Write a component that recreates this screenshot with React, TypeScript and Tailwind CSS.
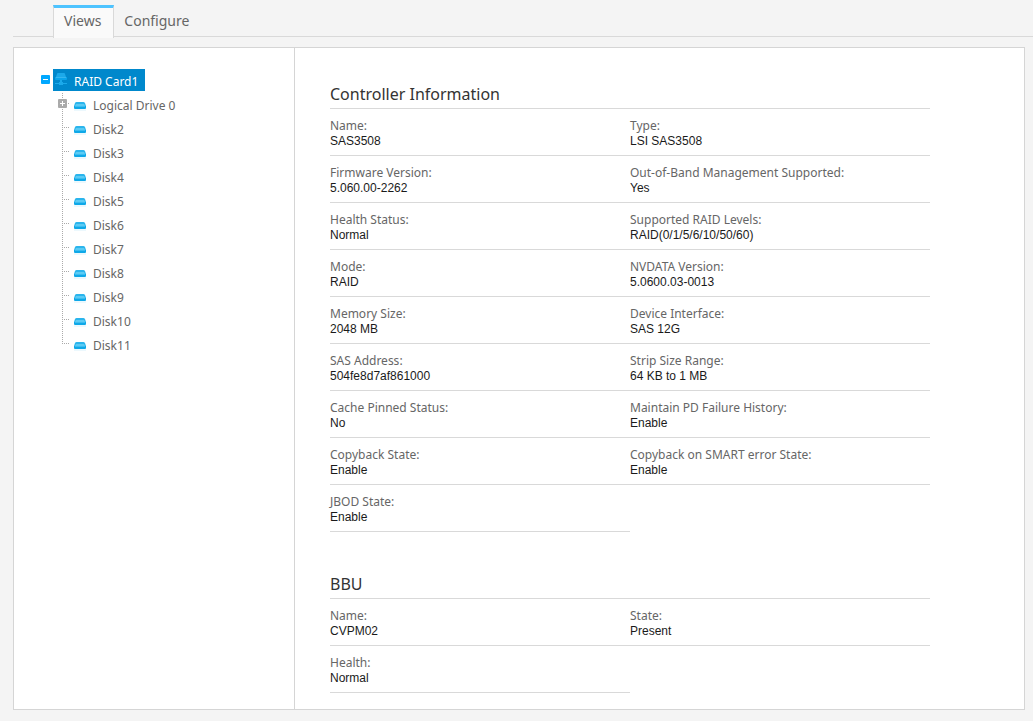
import { useState } from 'react';

interface Field {
  label: string;
  value: string;
}

const TABS = ['Views', 'Configure'];

const NODES = [
  'Logical Drive 0',
  'Disk2',
  'Disk3',
  'Disk4',
  'Disk5',
  'Disk6',
  'Disk7',
  'Disk8',
  'Disk9',
  'Disk10',
  'Disk11',
];

const CONTROLLER: Field[] = [
  { label: 'Name', value: 'SAS3508' },
  { label: 'Type', value: 'LSI SAS3508' },
  { label: 'Firmware Version', value: '5.060.00-2262' },
  { label: 'Out-of-Band Management Supported', value: 'Yes' },
  { label: 'Health Status', value: 'Normal' },
  { label: 'Supported RAID Levels', value: 'RAID(0/1/5/6/10/50/60)' },
  { label: 'Mode', value: 'RAID' },
  { label: 'NVDATA Version', value: '5.0600.03-0013' },
  { label: 'Memory Size', value: '2048 MB' },
  { label: 'Device Interface', value: 'SAS 12G' },
  { label: 'SAS Address', value: '504fe8d7af861000' },
  { label: 'Strip Size Range', value: '64 KB to 1 MB' },
  { label: 'Cache Pinned Status', value: 'No' },
  { label: 'Maintain PD Failure History', value: 'Enable' },
  { label: 'Copyback State', value: 'Enable' },
  { label: 'Copyback on SMART error State', value: 'Enable' },
  { label: 'JBOD State', value: 'Enable' },
];

const BBU: Field[] = [
  { label: 'Name', value: 'CVPM02' },
  { label: 'State', value: 'Present' },
  { label: 'Health', value: 'Normal' },
];

function CardIcon() {
  return (
    <svg width="14" height="14" viewBox="0 0 14 14" fill="none" aria-hidden="true">
      <path d="M4 0h6a1 1 0 0 1 1 1l1 3H2l1-3a1 1 0 0 1 1-1z" fill="#1ba9ea" />
      <path d="M1 4h12v2a1 1 0 0 1-1 1H2a1 1 0 0 1-1-1z" fill="#0aa4ea" />
      <path d="M2 4.5h10" stroke="#35b6f0" />
      <path d="M7 7v2" stroke="#1ba9ea" strokeWidth="2" />
      <path d="M1 10.5h12" stroke="#1ba9ea" />
      <path d="M5 9h4v3H5z" fill="#1ba9ea" />
    </svg>
  );
}

function DiskIcon() {
  return (
    <svg width="12" height="10" viewBox="0 0 12 10" fill="none" aria-hidden="true">
      <path d="M3 1h6a2 2 0 0 1 2 1l1 3H0l1-3a2 2 0 0 1 2-1z" fill="#2bb5ed" />
      <path d="M2 3h8l1 2H1z" fill="#5ccbf4" />
      <path d="M0 5h12v2a1 1 0 0 1-1 1H1a1 1 0 0 1-1-1z" fill="#0fa8e8" />
      <path d="M1 5.5h10" stroke="#3cbdf0" />
      <path d="M0 9h12" stroke="#d9f2fc" />
    </svg>
  );
}

function ToggleIcon({ open }: { open: boolean }) {
  return (
    <svg width="9" height="9" viewBox="0 0 9 9" aria-hidden="true">
      <rect width="9" height="9" rx="1" fill={open ? '#00a8ff' : '#aaaaaa'} />
      <path d={open ? 'M2 4.5h5' : 'M2 4.5h5M4.5 2v5'} stroke="#fff" />
    </svg>
  );
}

function InfoSection({ title, fields }: { title: string; fields: Field[] }) {
  return (
    <section>
      <h2 className="h-7 border-b border-[#d9d9d9] text-[16px] leading-[26px] text-[#333333]">{title}</h2>
      <dl className="grid grid-cols-2">
        {fields.map((f) => (
          <div key={f.label} className="border-b border-[#d9d9d9] pt-[9px] pb-[7px]">
            <dt className="text-[12px] leading-4 text-[#666666]">{f.label}:</dt>
            <dd className="font-['Liberation_Sans',Arial,sans-serif] text-[12px] leading-[14px] text-[#1a1a1a]">
              {f.value}
            </dd>
          </div>
        ))}
      </dl>
    </section>
  );
}

export default function App() {
  const [tab, setTab] = useState('Views');
  const [open, setOpen] = useState(true);
  const [selected, setSelected] = useState('RAID Card1');

  return (
    <div className="min-h-screen bg-[#f4f4f4] pt-[5px] pb-[11px] pl-[13px] font-['Noto_Sans','Open_Sans',sans-serif]">
      <nav className="flex h-8 border-b border-[#d9d9d9] pl-10">
        {TABS.map((t) => (
          <button
            key={t}
            onClick={() => setTab(t)}
            className={
              t === tab
                ? 'h-[33px] border-x border-t-3 border-x-[#d9d9d9] border-t-[#4dc3ff] bg-[#fafafa] pr-3 pb-[5px] pl-[10px] text-[14px] text-[#666666]'
                : 'h-[33px] border-t-3 border-transparent pr-3 pb-[5px] pl-[10px] text-[14px] text-[#666666]'
            }
          >
            {t}
          </button>
        ))}
      </nav>

      <main className="mt-[10px] mr-2 flex border border-[#d5d5d5] bg-white">
        <aside className="w-[281px] shrink-0 border-r border-[#d5d5d5] pt-[21px] pl-[27px]">
          <div className="flex">
            <button aria-label="Toggle RAID Card1" onClick={() => setOpen(!open)} className="mr-[3px] h-[21px]">
              <ToggleIcon open={open} />
            </button>
            <button
              onClick={() => setSelected('RAID Card1')}
              className={
                selected === 'RAID Card1'
                  ? 'flex h-[22px] items-center gap-[6px] bg-[#0088cc] pr-[7px] pl-px text-[12px] text-white'
                  : 'flex h-[22px] items-center gap-[6px] pr-[7px] pl-px text-[12px] text-[#666666]'
              }
            >
              <CardIcon />
              <span className="pt-1">RAID Card1</span>
            </button>
          </div>
          {open && (
            <ul className="mt-[2px] ml-[17px]">
              {NODES.map((n, i) => (
                <li key={n} className="flex h-6">
                  {/* connector lines */}
                  <svg width="16" height="24" viewBox="0 0 16 24" aria-hidden="true">
                    <path
                      d={i === NODES.length - 1 ? 'M4.5 0v11' : 'M4.5 0v24'}
                      stroke="#aaaaaa"
                      strokeDasharray="1 1"
                    />
                    <path d="M4 10.5h7" stroke="#aaaaaa" strokeDasharray="1 1" />
                    {i === 0 && (
                      <g transform="translate(0 6)">
                        <ToggleIcon open={false} />
                      </g>
                    )}
                  </svg>
                  <button
                    onClick={() => setSelected(n)}
                    className={
                      selected === n
                        ? 'flex items-center gap-[7px] bg-[#0088cc] pt-[2px] text-[12px] text-white'
                        : 'flex items-center gap-[7px] pt-[2px] text-[12px] text-[#666666]'
                    }
                  >
                    <DiskIcon />
                    {n}
                  </button>
                </li>
              ))}
            </ul>
          )}
        </aside>

        <div className="min-w-0 flex-1 pt-[33px] pr-6 pb-4 pl-[35px]">
          <div className="flex max-w-[600px] flex-col gap-[39px]">
            <InfoSection title="Controller Information" fields={CONTROLLER} />
            <InfoSection title="BBU" fields={BBU} />
          </div>
        </div>
      </main>
    </div>
  );
}
